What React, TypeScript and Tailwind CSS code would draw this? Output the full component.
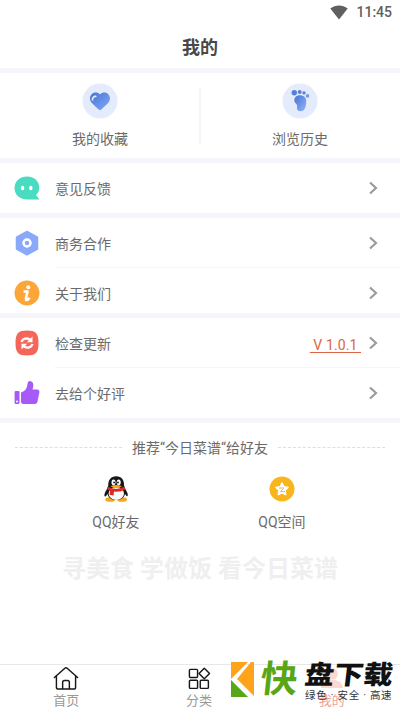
import type { ReactNode } from "react";

function WifiIcon() {
  return (
    <svg width="18" height="15" viewBox="0 0 18 15">
      <path d="M0.3 3.5C5.5 -0.6 12.5 -0.6 17.7 3.5L9 14.5Z" fill="#606060" />
    </svg>
  );
}

function HeartIcon() {
  return (
    <svg width="36" height="36" viewBox="0 0 36 36">
      <defs>
        <linearGradient id="heart" x1="0" y1="0" x2="1" y2="1">
          <stop offset="0" stopColor="#4674d3" />
          <stop offset="1" stopColor="#83a8f7" />
        </linearGradient>
      </defs>
      <circle cx="18" cy="18" r="17.5" fill="#e4ebfd" />
      <path
        d="M18 11.500C15.500 8.800 11.500 9.200 9.500 11.500C7.300 14 7.600 17.500 9.900 20L16.300 26.300C17.400 27.400 18.500 27.400 19.600 26.300L26.100 20C28.400 17.500 28.600 14 26.500 11.500C24.500 9.200 20.500 8.800 18 11.500Z"
        fill="url(#heart)"
      />
      <path d="M10.500 17C10.200 14.700 11.700 13.300 13.800 13.400" stroke="#e4edff" strokeWidth="1.600" strokeLinecap="round" fill="none" />
    </svg>
  );
}

function FootIcon() {
  return (
    <svg width="36" height="36" viewBox="0 0 36 36">
      <defs>
        <linearGradient id="foot" x1="0" y1="0" x2="1" y2="1">
          <stop offset="0" stopColor="#4674d3" />
          <stop offset="1" stopColor="#93b4fa" />
        </linearGradient>
      </defs>
      <circle cx="18" cy="18" r="17.5" fill="#e4ebfd" />
      <g fill="#5580d6">
        <circle cx="12.300" cy="9.800" r="2.700" />
        <circle cx="17.700" cy="9" r="2" />
        <circle cx="22" cy="9.900" r="1.700" />
        <circle cx="25.500" cy="12.900" r="1.800" fill="#7799e2" />
      </g>
      <path
        d="M12.300 17.500C12.400 14 15 12.200 18.500 12.300C22.500 12.500 24.700 15.500 24.200 19.500C23.900 22.500 23.600 24.500 22.300 26.500C21 28.500 16.300 28.900 15.300 26.500C14.500 24.500 15.700 23.500 14.700 21.500C13.900 20 12.200 19.500 12.300 17.500Z"
        fill="url(#foot)"
      />
    </svg>
  );
}

function ChatIcon() {
  return (
    <svg width="26" height="26" viewBox="0 0 26 26">
      <path d="M13 1.500C20 1.500 25.300 6 25.300 12.500C25.300 15.500 24 18 22 20L25.500 24.500H13C5.500 24.500 0.500 19.500 0.500 13C0.500 6 6 1.500 13 1.500Z" fill="#49dcc0" />
      <ellipse cx="8.500" cy="13" rx="1.800" ry="2.300" fill="#fff" />
      <ellipse cx="16.800" cy="13" rx="1.800" ry="2.300" fill="#fff" />
    </svg>
  );
}

function HexIcon() {
  return (
    <svg width="26" height="26" viewBox="0 0 26 26">
      <path d="M13 1.500L23.500 7.200V19L13 24.800L2.500 19V7.200Z" fill="#8ba9fa" stroke="#8ba9fa" strokeWidth="1.500" strokeLinejoin="round" />
      <circle cx="13" cy="13" r="3.500" fill="none" stroke="#fff" strokeWidth="2.500" />
    </svg>
  );
}

function InfoIcon() {
  return (
    <svg width="26" height="26" viewBox="0 0 26 26">
      <circle cx="13" cy="13" r="12.500" fill="#fca63a" />
      <circle cx="14.300" cy="7.300" r="2" fill="#fff" />
      <path d="M9.500 11.500H13.500L11.800 19.300M11 19.800Q14 20.300 15.500 17.800" stroke="#fff" strokeWidth="2.600" strokeLinejoin="round" fill="none" />
    </svg>
  );
}

function UpdateIcon() {
  return (
    <svg width="26" height="26" viewBox="0 0 26 26">
      <path d="M13 0.500C21.500 0.500 24.500 3 24.500 13S21.500 25.500 13 25.500S1.500 23 1.500 13S4.500 0.500 13 0.500Z" fill="#f5665a" />
      <path d="M7.500 12C8.500 8.500 12.500 7.500 16 9.500M18.500 14C17.500 17.500 13.500 18.500 10 16.500" stroke="#fff" strokeWidth="2.400" fill="none" />
      <path d="M18.500 6.500V12.200H12.800ZM7.500 19.500V13.800H13.200Z" fill="#fff" />
    </svg>
  );
}

function ThumbIcon() {
  return (
    <svg width="26" height="26" viewBox="0 0 26 26">
      <path d="M1.800 11H4.300Q5.500 11 5.500 12.200V22.800Q5.500 24 4.300 24H1.800Q0.600 24 0.600 22.800V12.200Q0.600 11 1.800 11Z" fill="#a65af8" />
      <circle cx="3" cy="21.500" r="1" fill="#fff" />
      <path d="M7 12.500C11 11.500 13 8 13.500 4C13.700 1.500 15 0.700 16.700 1.200C20 2 19.700 6 18.500 9.500H23C25 9.500 25.700 11 25.300 12.800L23.500 21.500C23 23.300 22.200 24 20.500 24H9.500Q7 24 7 21.500Z" fill="#a65af8" />
    </svg>
  );
}

function PenguinIcon() {
  return (
    <svg width="26" height="26" viewBox="0 0 26 26">
      <ellipse cx="7.300" cy="23.500" rx="5" ry="2.300" fill="#f8a51b" />
      <ellipse cx="19" cy="23.500" rx="5" ry="2.300" fill="#f8a51b" />
      <path d="M13.200 0.300C7.700 0.300 5 4.500 5.300 9.500L3.500 14C1.300 17 1 20 2 20.500C3 20.800 4 18.500 4.500 18C5.500 22 9 24 13.200 24S21 22 22 18C22.500 18.500 23.500 20.800 24.300 20.300C25.400 19.500 24.700 16.500 22.800 14L21 9.500C21.400 4.500 18.700 0.300 13.200 0.300Z" fill="#151719" />
      <ellipse cx="13.300" cy="17.500" rx="7.700" ry="6.500" fill="#fafafa" />
      <ellipse cx="10.500" cy="6.300" rx="2" ry="2.900" fill="#fff" />
      <ellipse cx="15.700" cy="6.300" rx="2" ry="2.900" fill="#fff" />
      <circle cx="11.100" cy="6.500" r="0.900" fill="#111" />
      <circle cx="15" cy="6.500" r="0.900" fill="#111" />
      <path d="M7.500 10.200Q13.200 7.800 18.900 10.200Q13.200 14.300 7.500 10.200Z" fill="#f8aa19" />
      <path d="M5 10.800Q13 15 21.200 10.800L22.500 13.200Q17.500 16.500 11 15.600L10.500 19.500L6.500 18.800L7.100 14.700L3.800 13Z" fill="#dc2924" />
    </svg>
  );
}

function QzoneIcon() {
  return (
    <svg width="26" height="26" viewBox="0 0 26 26">
      <circle cx="13" cy="13" r="12.500" fill="#f8b61c" />
      <path d="M13 6.500L15.100 10.500L19.500 11.300L16.400 14.500L17 19L13 17.200L9 19L9.600 14.500L6.500 11.300L10.900 10.500Z" fill="#fff" stroke="#fff" strokeLinejoin="round" />
      <path d="M10 12H15L11.500 15.500H16" fill="none" stroke="#f4b62d" strokeWidth="0.900" />
    </svg>
  );
}

function Chevron() {
  return (
    <svg width="10" height="14" viewBox="0 0 10 14">
      <path d="M2 1.500L8 7L2 12.500" fill="none" stroke="#9b9b9b" strokeWidth="2.200" />
    </svg>
  );
}

function Row({ icon, label, extra }: { icon: ReactNode; label: string; extra?: ReactNode }) {
  return (
    <div className="flex h-[50px] items-center pl-3.5 pr-[22px]">
      {icon}
      <span className="ml-[15px] flex-1 pt-0.5">{label}</span>
      {extra}
      <Chevron />
    </div>
  );
}

function Shortcut({ icon, label }: { icon: ReactNode; label: string }) {
  return (
    <div className="flex flex-1 flex-col items-center pt-2.5">
      {icon}
      <span className="mt-2.5 leading-[21px]">{label}</span>
    </div>
  );
}

function TabBar() {
  return (
    <nav className="flex h-[46px] border-t border-[#e8e8e8] pr-0.5 text-[13px] leading-[18px] text-[#999]">
      <div className="flex flex-1 flex-col items-center pt-0.5">
        <svg width="26" height="24" viewBox="0 0 26 24" fill="none" stroke="#171717" strokeWidth="1.500" strokeLinejoin="round" strokeLinecap="round">
          <path d="M0.900 11L11.800 1.300Q13 0.300 14.200 1.300L25.100 11M3 9.500V21Q3 23 5 23H21Q23 23 23 21V9.500M9.500 23V16Q9.500 14 11.500 14H14.500Q16.500 14 16.500 16V23" />
        </svg>
        <span className="mt-0.5">首页</span>
      </div>
      <div className="flex flex-1 flex-col items-center pt-0.5">
        <svg width="24" height="24" viewBox="0 0 24 24" fill="none" stroke="#171717" strokeWidth="1.500" strokeLinejoin="round">
          <rect x="2" y="2.500" width="8.500" height="8.500" rx="1" />
          <path d="M17.500 1.300L23 6.800L17.500 12.300L12 6.800Z" />
          <rect x="2" y="13.800" width="8.500" height="8.500" rx="1" />
          <rect x="13.300" y="13.800" width="8.500" height="8.500" rx="1" />
        </svg>
        <span className="mt-0.5">分类</span>
      </div>
      <div className="flex flex-1 flex-col items-center pt-0.5 text-[#f0a29a]">
        <svg width="26" height="24" viewBox="0 0 26 24" fill="#fbd8d2">
          <circle cx="13" cy="7.500" r="6.500" />
          <path d="M1 23C1 11 25 11 25 23Z" />
        </svg>
        <span className="mt-[3px]">我的</span>
      </div>
    </nav>
  );
}

function DownloadBadge() {
  return (
    <div className="absolute bottom-0 right-0 flex h-[49px] w-[170px] font-black">
      <svg className="mt-px ml-px" width="23" height="35" viewBox="0 0 23 35">
        <path d="M0 0H17L0 17Z" fill="#ffa31a" />
        <path d="M20 0H23V34L6 17Z" fill="#ffa31a" />
        <path d="M0 18L17 35H0Z" fill="#58a618" />
      </svg>
      <span className="w-[43px] pl-[6px] text-[37px] font-bold leading-[38px] text-[#58a618] -skew-x-6">快</span>
      <div className="flex flex-col">
        <span className="origin-left scale-x-[1.130] -skew-x-6 whitespace-nowrap pl-[7px] text-[26px] leading-[28px] text-[#111]">盘下载</span>
        <span className="-mt-px whitespace-nowrap pl-2 text-[10.500px] leading-[15px] font-normal tracking-[0.700px] text-[#333]">绿色 · 安全 · 高速</span>
      </div>
    </div>
  );
}

export default function App() {
  return (
    <div className="relative flex h-[710px] w-[400px] flex-col overflow-hidden bg-white font-['Roboto','Noto_Sans_CJK_SC',sans-serif] text-sm text-[#6b6b6b]">
      <div className="flex h-6 items-center justify-end gap-2 pr-2">
        <WifiIcon />
        <span className="text-sm font-medium text-[#606060]">11:45</span>
      </div>
      <header className="flex h-11 items-center justify-center pt-[3px] text-lg font-bold text-[#484848]">我的</header>

      <div className="flex h-[95px] border-y-[5px] border-[#f5f5fc]">
        <Shortcut icon={<HeartIcon />} label="我的收藏" />
        <div className="-mx-px mt-[15px] h-14 w-0.5 bg-[#f5f5fa]" />
        <Shortcut icon={<FootIcon />} label="浏览历史" />
      </div>

      <Row icon={<ChatIcon />} label="意见反馈" />
      <div className="h-[5px] bg-[#f5f5fc]" />
      <Row icon={<HexIcon />} label="商务合作" />
      <div className="-mt-px ml-[55px] h-px bg-[#f4f4f7]" />
      <Row icon={<InfoIcon />} label="关于我们" />
      <div className="-mt-[5px] h-[5px] bg-[#f5f5fc]" />
      <Row
        icon={<UpdateIcon />}
        label="检查更新"
        extra={<span className="mr-[7px] whitespace-pre pt-[3px] tracking-[0.100px] text-[#dc6547] underline underline-offset-2"> V 1.0.1 </span>}
      />
      <div className="-mt-px ml-[55px] h-px bg-[#f4f4f7]" />
      <Row icon={<ThumbIcon />} label="去给个好评" />
      <div className="h-[5px] bg-[#f5f5fc]" />

      <div className="mt-[13px] flex h-[22px] items-center px-[15px]">
        <div className="flex-1 border-t border-dashed border-[#dedede]" />
        <span className="px-[10px] pt-0.5">推荐“今日菜谱“给好友</span>
        <div className="flex-1 border-t border-dashed border-[#dedede]" />
      </div>
      <div className="mt-[18px] flex px-[33px]">
        <div className="flex flex-1 flex-col items-center">
          <PenguinIcon />
          <span className="mt-2.5 leading-[21px]">QQ好友</span>
        </div>
        <div className="flex flex-1 flex-col items-center pr-0.5">
          <QzoneIcon />
          <span className="mt-2.5 leading-[21px]">QQ空间</span>
        </div>
      </div>
      <div className="mt-5 text-center text-2xl font-bold text-[#efefef]">寻美食 学做饭 看今日菜谱</div>

      <div className="mt-auto">
        <TabBar />
      </div>
      <DownloadBadge />
    </div>
  );
}
